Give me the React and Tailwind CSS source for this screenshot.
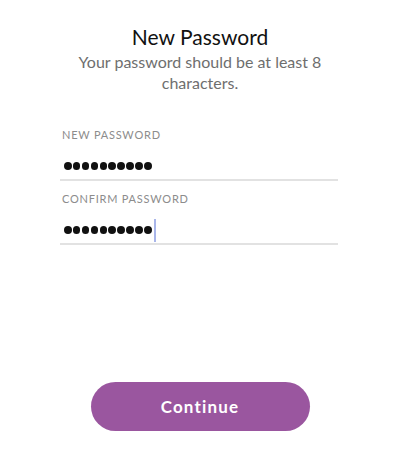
const Dots = ({ count, cursor }) => (
  <div className="flex items-center h-[24px] pl-[4px]">
    <div className="flex items-center gap-[1.4px]">
      {Array.from({ length: count }).map((_, i) => (
        <span key={i} className="block w-[7.5px] h-[7.5px] rounded-full bg-[#111]" />
      ))}
    </div>
    {cursor && <span className="block ml-[2px] w-[2px] h-[23px] bg-[#a9b6ea]" />}
  </div>
);

const Field = ({ label, count, cursor }) => (
  <div className="flex flex-col">
    <div className="pl-[2px] text-[11px] leading-[14px] tracking-[0.07em] text-[#8c8c8c]">{label}</div>
    <div className="mt-[12px]">
      <Dots count={count} cursor={cursor} />
    </div>
    <div className="mt-[1px] h-[2px] bg-[#e2e2e2]" />
  </div>
);

export default function App() {
  return (
    <div
      className="w-[400px] h-[449px] bg-white flex flex-col overflow-hidden"
      style={{ fontFamily: 'Lato, "Noto Sans", sans-serif' }}
    >
      <div className="flex flex-col items-center pt-[24px]">
        <h1 className="text-[21px] leading-[26px] text-[#111]">New Password</h1>
        <p className="mt-[1px] w-[270px] text-center text-[16px] leading-[21px] text-[#6e6e6e]">
          Your password should be at least 8 characters.
        </p>
      </div>

      <div className="ml-[60px] w-[278px] mt-[35px] flex flex-col gap-[11px]">
        <Field label="NEW PASSWORD" count={10} />
        <Field label="CONFIRM PASSWORD" count={10} cursor />
      </div>

      <div className="flex-1" />

      <div className="flex justify-center pb-[18px]">
        <button className="w-[219px] h-[49px] rounded-full bg-[#9a569f] text-white text-[17px] font-bold tracking-[0.07em]">
          Continue
        </button>
      </div>
    </div>
  );
}
